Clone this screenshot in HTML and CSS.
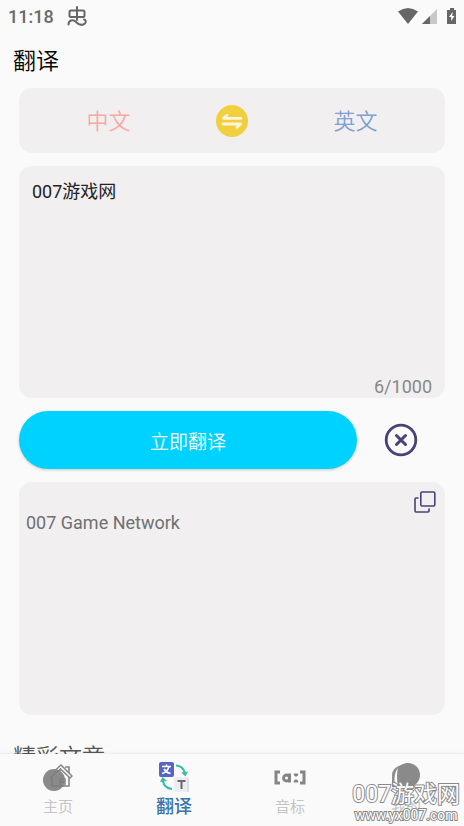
FILE: index.html
```html
<!DOCTYPE html>
<html lang="zh-CN">
<head>
<meta charset="utf-8">
<meta name="viewport" content="width=device-width, initial-scale=1">
<title>翻译</title>
<link rel="stylesheet" href="styles.css">
</head>
<body>
<header class="status">
  <span class="clock">11:18</span>
  <svg class="debug" width="20" height="20" viewBox="0 0 20 20" fill="none" stroke="#666" stroke-width="2" stroke-linecap="round" stroke-linejoin="round"><path d="M10 1v13M4 4.500h12q1.500 0 1.500 1.500v3.500q0 1.500-1.500 1.500H4q-1.500 0-1.500-1.500V6q0-1.500 1.500-1.500zM1.500 18.500c0-5 5-5 7.500-2.500s6 4 9 1.500c1.500-2 .5-4-1-4"/></svg>
  <span class="signals">
    <svg width="20" height="16" viewBox="0 0 20 16"><path fill="#666" d="M0 3.500Q10-3.500 20 3.500L10 16z"/></svg>
    <svg width="15" height="15" viewBox="0 0 15 15"><path fill="#c8c8c8" d="M15 0v15H0z"/><path fill="#666" d="M8 7v8H0z"/></svg>
    <svg width="9" height="16" viewBox="0 0 9 16"><path fill="#666" d="M3 0h4v2h2v14H0V2h3z"/><path fill="#fafafa" d="M5.500 4L2 9h2.200v4L7.500 8H5.300z"/></svg>
  </span>
</header>
<main class="page">
  <h1 class="title">翻译</h1>
  <section class="card languages">
    <button class="lang source" type="button">中文</button>
    <button class="swap" type="button" aria-label="切换语言">
      <svg width="32" height="32" viewBox="0 0 32 32"><circle cx="16" cy="16" r="16" fill="#f2cf3e"/><path d="M25 13.300H7.500L11 10.200M7 19H24.500L21 22.200" fill="none" stroke="#fcf6dc" stroke-width="2.800" stroke-linecap="round" stroke-linejoin="round"/></svg>
    </button>
    <button class="lang target" type="button">英文</button>
  </section>
  <section class="card input-card">
    <textarea class="input" aria-label="输入文本" maxlength="1000">007游戏网</textarea>
    <span class="count">6/1000</span>
  </section>
  <div class="actions">
    <button class="translate" type="button">立即翻译</button>
    <button class="clear" type="button" aria-label="清空">
      <svg width="34" height="34" viewBox="0 0 34 34" fill="none" stroke="#4a4178" stroke-linecap="round"><circle cx="17" cy="17" r="14.800" stroke-width="2.800"/><path d="M12.500 12.500l9 9M21.500 12.500l-9 9" stroke-width="3"/></svg>
    </button>
  </div>
  <section class="card output-card">
    <p class="output">007 Game Network</p>
    <button class="copy" type="button" aria-label="复制">
      <svg width="22" height="22" viewBox="0 0 22 22" fill="none" stroke="#4a4178" stroke-width="1.600" stroke-linejoin="round" stroke-linecap="round"><rect x="6.800" y="1" width="14" height="14" rx="1.200"/><path d="M4 7H2Q1 7 1 8V20Q1 21 2 21H14Q15 21 15 20V18"/></svg>
    </button>
  </section>
  <h2 class="articles">精彩文章</h2>
</main>
<nav class="tabs">
  <a class="tab" href="#home">
    <svg width="30" height="30" viewBox="0 0 30 30"><path d="M22 5h4v19H11V12" fill="none" stroke="#858585" stroke-width="1.600"/><path d="M6 14L18 3l11 11-2 2L18 7.500 9 16z" fill="#fafafa" stroke="#858585" stroke-width="1.500"/><path d="M17 24v-7h5v7M17 20h5" fill="none" stroke="#858585" stroke-width="1.500"/><circle cx="11" cy="18" r="11" fill="#8a8a8a"/><path d="M7 16L18 6M9 15v9h12M17 24v-7h4M17 20h4" fill="none" stroke="#777" stroke-width="1"/></svg>
    <span>主页</span>
  </a>
  <a class="tab active" href="#translate">
    <svg width="32" height="32" viewBox="0 0 32 32"><rect x="1" y="1" width="15" height="15" rx="2" fill="#5965c4"/><path d="M4 5.500h9M8.500 3.500v2M11 6Q9 11 4 12.500M6 8Q8 11.500 12.500 12.500" fill="none" stroke="#fff" stroke-width="1.600"/><rect x="16" y="16" width="15" height="15" rx="2" fill="#ececf2"/><path d="M29 16v15h2V17z" fill="#d4e0ea"/><path d="M19.500 20h8M23.500 20v8" stroke="#706670" stroke-width="2" fill="none"/><path d="M18 4.500Q25 5 27 12M14 28Q6 27 5 20" fill="none" stroke="#35bea5" stroke-width="2"/><path d="M23 11.500l7-1-2.500 5zM2 21l2.500-5 4.500 4z" fill="#35bea5"/></svg>
    <span>翻译</span>
  </a>
  <a class="tab" href="#phonetics">
    <svg width="32" height="30" viewBox="0 0 32 30" fill="none" stroke="#858585"><path d="M6 10H2v11h4M26 10h4v11h-4" stroke-width="3"/><path d="M15.500 11.500v9" stroke-width="3"/><circle cx="12.500" cy="16" r="3" stroke-width="2.800"/><path d="M20 12h4l-1 2h-2zM20 20h4l-1-2h-2z" fill="#858585" stroke-width="1"/></svg>
    <span>音标</span>
  </a>
  <a class="tab" href="#mine">
    <svg width="30" height="30" viewBox="0 0 30 30"><path d="M1 25V13Q1 6 10 3L17 1L17 26z" fill="#8d8d8d"/><circle cx="17" cy="13" r="12" fill="#8a8a8a"/><path d="M4 23Q2 12 7 6Q5 14 7 23" fill="#fafafa"/></svg>
    <span>我的</span>
  </a>
</nav>
<div class="watermark"><span class="mark-name">007游戏网</span><span class="mark-url">www.yx007.com</span></div>
</body>
</html>
```
FILE: styles.css
```css
* { box-sizing: border-box; }
body {
  margin: 0;
  height: 100vh;
  display: flex;
  flex-direction: column;
  position: relative;
  overflow: hidden;
  background: #fafafa;
  color: #000;
  font-family: Roboto, "Noto Sans CJK SC", sans-serif;
}
button {
  border: 0;
  padding: 0;
  background: none;
  font: inherit;
  color: inherit;
}
svg { display: block; flex: none; }
.status {
  display: flex;
  align-items: center;
  height: 32px;
  padding: 0 8px;
  flex: none;
  color: #6a6a6a;
}
.clock { font-size: 18px; font-weight: 500; }
.debug { margin-left: 13px; }
.signals { display: flex; align-items: center; gap: 4px; margin-left: auto; }
.signals svg:last-child { margin-left: 6px; }
.page {
  flex: 1;
  min-height: 0;
  overflow: hidden;
  display: flex;
  flex-direction: column;
  padding: 10px 19px 0;
}
.page > * { flex: none; }
.title, .articles {
  margin: 0 -6px;
  font-family: "Noto Sans CJK SC", sans-serif;
  font-size: 23px;
  line-height: 34px;
  font-weight: 350;
}
.title { margin-bottom: 12px; }
.articles { margin-top: 23px; color: #555; }
.card { background: #f1eff0; border-radius: 13px; }
.languages {
  display: grid;
  grid-template-columns: 1fr 32px 1fr;
  column-gap: 18px;
  align-items: center;
  height: 65px;
  font-size: 22px;
  font-weight: 350;
}
.lang { height: 62px; align-self: start; }
.source { color: #f5aaa6; }
.target { color: #7f9fd0; }
.input-card {
  display: flex;
  flex-direction: column;
  height: 232px;
  margin: 13px 0;
  padding: 13px 13px 0;
}
.input {
  flex: 1;
  resize: none;
  border: 0;
  padding: 0;
  background: none;
  outline: 0;
  color: #222;
  font: inherit;
  font-size: 18px;
  line-height: 26px;
}
.count {
  align-self: flex-end;
  font-size: 18px;
  line-height: 22px;
  color: #888;
}
.actions { display: flex; align-items: center; }
.translate {
  flex: 1;
  height: 58px;
  border-radius: 29px;
  background: #00d2ff;
  color: #fff;
  font-size: 19px;
  font-weight: 350;
  box-shadow: 0 1px 3px #0003;
}
.clear { width: 88px; display: grid; place-items: center; }
.output-card {
  display: flex;
  align-items: flex-start;
  justify-content: space-between;
  height: 233px;
  margin-top: 13px;
  padding: 9px 9px 7px 7px;
}
.output {
  margin: 20px 0 0;
  color: #707070;
  font-size: 18px;
  line-height: 24px;
}
.tabs {
  display: grid;
  grid-template-columns: repeat(4, 1fr);
  flex: none;
  height: 72px;
  box-shadow: 0 -1px 3px #0001;
}
.tab {
  display: flex;
  flex-direction: column;
  align-items: center;
  padding-top: 7px;
  color: #c5c5c5;
  text-decoration: none;
  font-size: 15px;
}
.tab svg { height: 32px; }
.tab span { line-height: 28px; }
.active { color: #3873aa; font-size: 18px; font-weight: 500; }
.watermark {
  position: absolute;
  right: 4px;
  bottom: 3px;
  display: flex;
  flex-direction: column;
  align-items: center;
  color: #fff;
  -webkit-text-stroke: 2px #8a8a8a;
  paint-order: stroke fill;
  pointer-events: none;
}
.mark-name { font-size: 23px; line-height: 26px; }
.mark-url { font-size: 14px; line-height: 15px; }
```
